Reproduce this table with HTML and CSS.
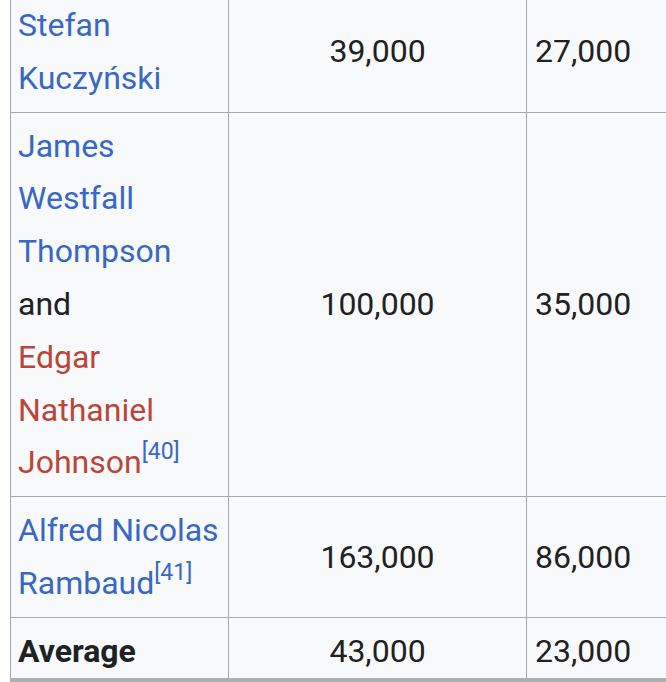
FILE: index.html
```html
<!DOCTYPE html>
<html lang="en">
<head>
<meta charset="utf-8">
<title>Table</title>
<link rel="stylesheet" href="styles.css">
</head>
<body>
<div class="scroller">
  <table class="wikitable">
    <tbody>
      <tr>
        <td class="name"><a class="link" href="#">Stefan Kuczyński</a></td>
        <td class="num center">39,000</td>
        <td class="num">27,000</td>
      </tr>
      <tr>
        <td class="name"><a class="link" href="#">James Westfall Thompson</a> and<br><a class="link new" href="#">Edgar Nathaniel Johnson</a><sup class="ref"><a class="link" href="#">[40]</a></sup></td>
        <td class="num center">100,000</td>
        <td class="num">35,000</td>
      </tr>
      <tr>
        <td class="name"><a class="link" href="#">Alfred Nicolas Rambaud</a><sup class="ref"><a class="link" href="#">[41]</a></sup></td>
        <td class="num center">163,000</td>
        <td class="num">86,000</td>
      </tr>
      <tr>
        <td class="name total">Average</td>
        <td class="num center">43,000</td>
        <td class="num">23,000</td>
      </tr>
    </tbody>
  </table>
</div>
<div class="bottom-shade"></div>
</body>
</html>
```
FILE: styles.css
```css
html, body {
  margin: 0;
  padding: 0;
  background: #ffffff;
}
body {
  font-family: Roboto, "Noto Sans", "Liberation Sans", sans-serif;
  font-size: 32px;
  line-height: 52.8px;
  color: #202122;
  overflow: hidden;
  height: 682px;
}
.scroller {
  padding-left: 10px;
  margin-top: -9px;
  overflow: hidden;
}
.wikitable {
  border-collapse: collapse;
  background: #f8f9fa;
  width: 800px;
  table-layout: fixed;
}
.wikitable td {
  border: 1px solid #a2a9b1;
  padding: 7px 8px;
  vertical-align: middle;
  text-align: left;
}
.wikitable td.name {
  width: 202px;
  padding-left: 7px;
}
.wikitable td.center {
  width: 281px;
  text-align: center;
}
.total {
  font-weight: bold;
}
.link {
  color: #3867c6;
  text-decoration: none;
}
.link.new {
  color: #ba463a;
}
.ref {
  font-size: 23px;
  line-height: 1;
  vertical-align: 14px;
}
.bottom-shade {
  position: fixed;
  left: 10px;
  right: 0;
  bottom: 0;
  height: 4px;
  background: #acaeb1;
}
```
